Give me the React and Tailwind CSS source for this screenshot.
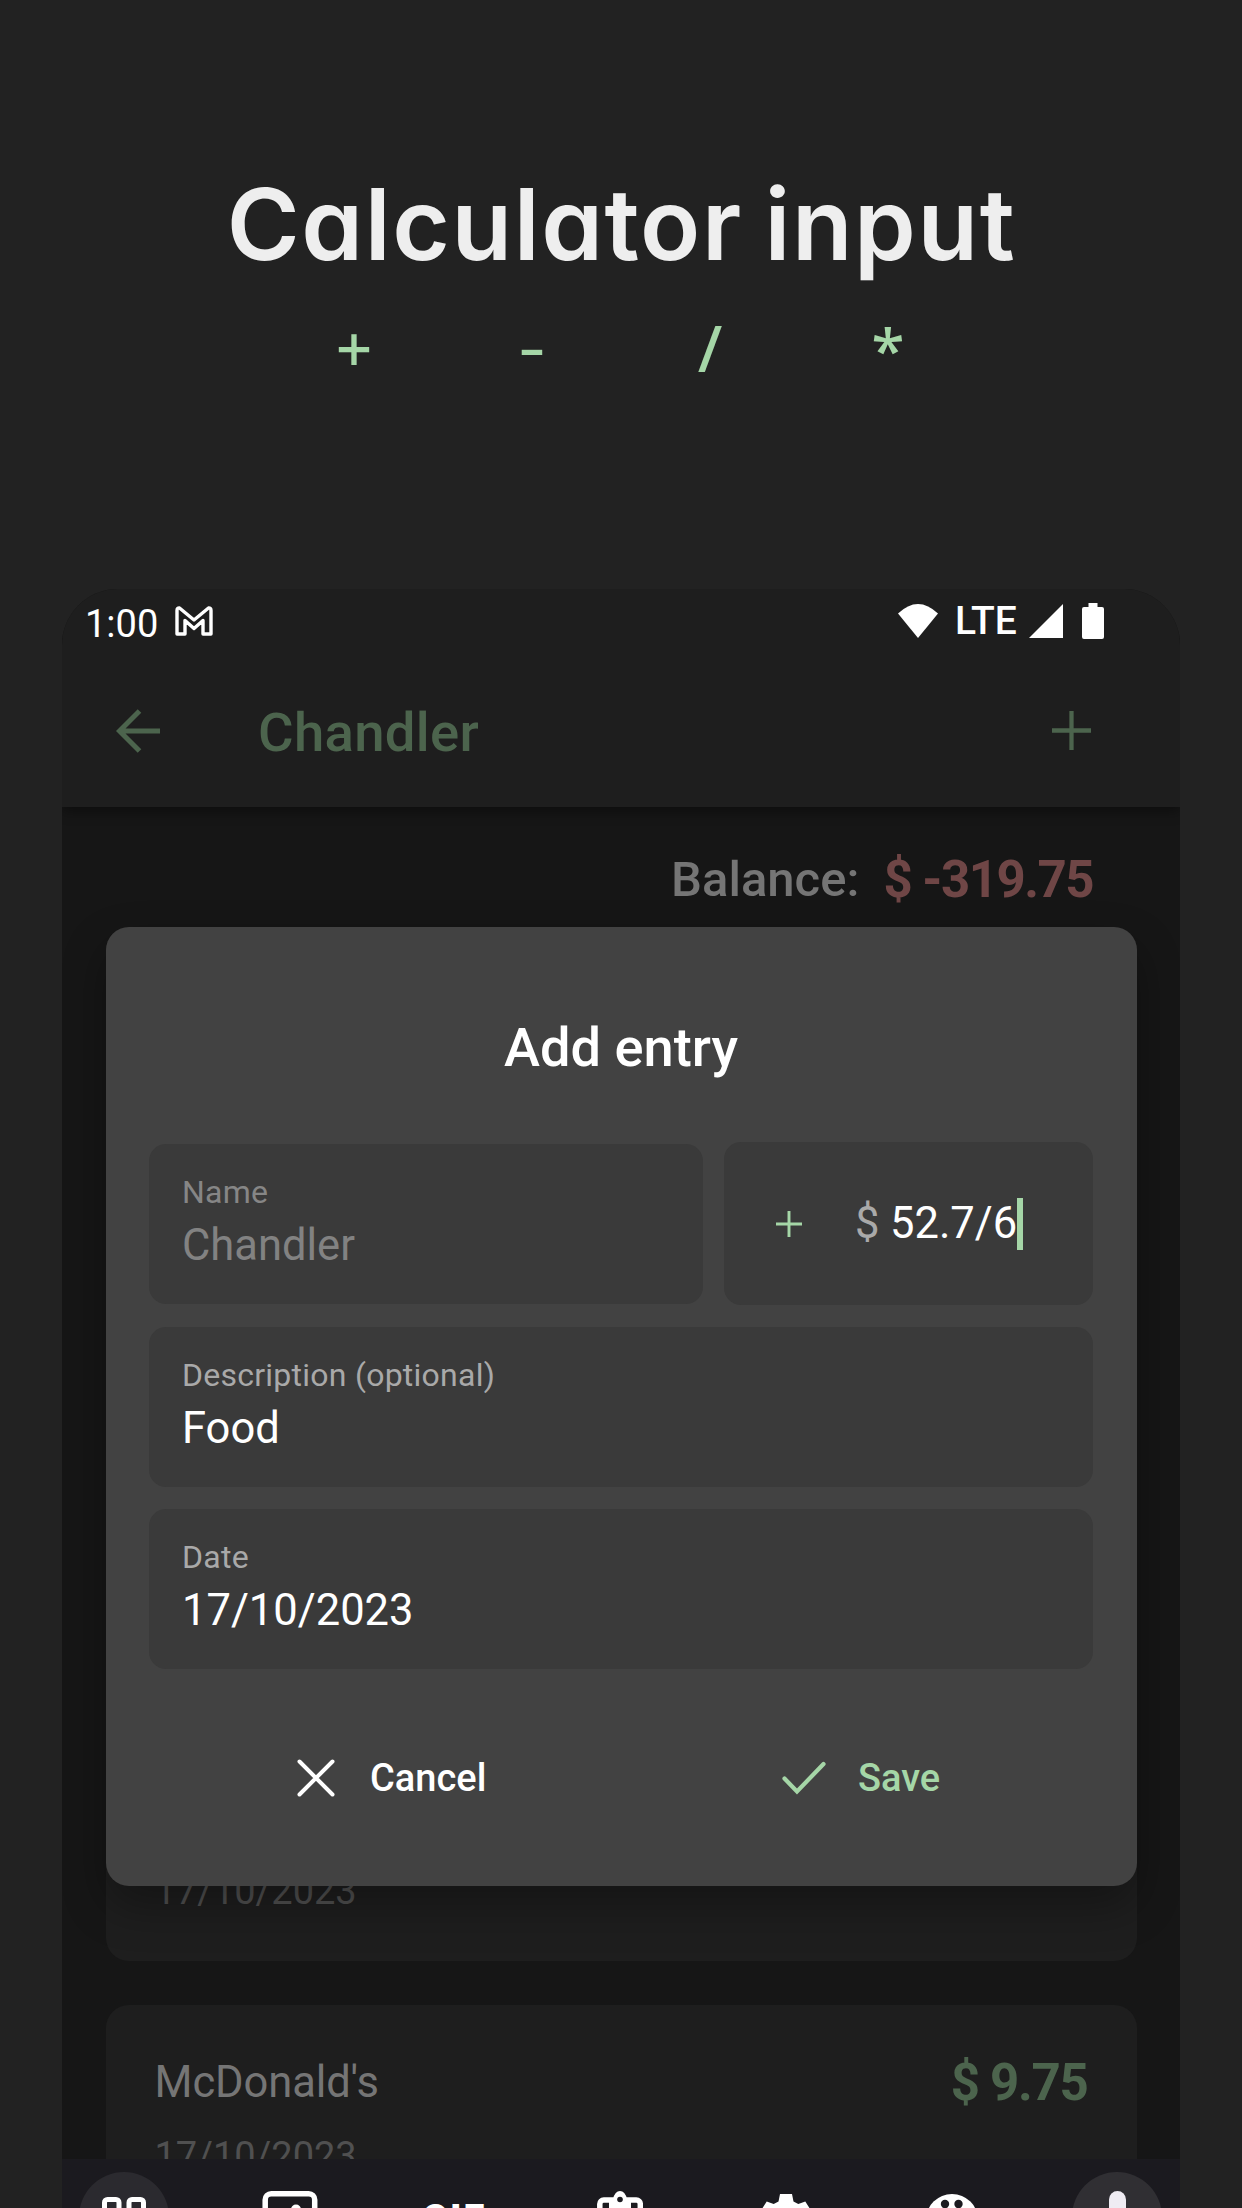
const stroke = { fill: "none", stroke: "currentColor" };

function Plus({ className, width }) {
  return (
    <svg viewBox="0 0 40 40" className={className} {...stroke} strokeWidth={width}>
      <path d="M20 0V40M0 20H40" />
    </svg>
  );
}

function StatusBar() {
  return (
    <div className="flex h-[69px] items-center pl-[23px] pr-[76px] text-white">
      <span className="w-[89.500px] text-[38px] leading-[44px]">1:00</span>
      <svg viewBox="0 0 38 30" className="h-[30px] w-[38px] -mt-[5px]" {...stroke} strokeWidth="3.4" strokeLinejoin="round">
        <path d="M2 4.5Q2 1.8 4.5 2L19 14L33.500 2Q36 1.800 36 4.500V28H28V14.500L19 22.500L10 14.500V28H2Z" />
      </svg>
      <div className="ml-auto flex items-center -mt-[5px]">
        <svg viewBox="0 0 40 34" className="h-[34px] w-10" fill="currentColor">
          <path d="M0 9.500Q20 -9.500 40 9.500L20 34Z" />
        </svg>
        <span className="ml-[17px] w-[67px] text-[39px] font-[500] leading-[44px] tracking-[-0.2px]">LTE</span>
        <svg viewBox="0 0 34 34" className="ml-[7px] h-[34px] w-[34px]" fill="currentColor">
          <path d="M34 0V34H0Z" />
        </svg>
        <svg viewBox="0 0 22 36" className="ml-[19px] h-9 w-[22px]" fill="currentColor">
          <path d="M6.500 0H15.500V4H20Q22 4 22 6V34Q22 36 20 36H2Q0 36 0 34V6Q0 4 2 4H6.500Z" />
        </svg>
      </div>
    </div>
  );
}

function Field({ label, value, muted }) {
  return (
    <div className="h-[160px] rounded-[17px] bg-[#3a3a3a] pl-[33px] pt-[29px]">
      <div className={muted ? "text-[32px] leading-[38px] tracking-[0.25px] text-[#868686]" : "text-[32px] leading-[38px] tracking-[0.25px] text-[#a9a9a9]"}>{label}</div>
      <div className={muted ? "mt-[9px] text-[43.500px] leading-[52px] text-[#828282]" : "mt-[9px] text-[43.500px] leading-[52px] text-white"}>{value}</div>
    </div>
  );
}

function Dialog() {
  return (
    <div className="absolute left-[43.500px] top-[338px] h-[959px] w-[1031px] rounded-[23px] bg-[#424242] px-[43.500px] shadow-[0_20px_45px_rgba(0,0,0,0.32)]">
      <h2 className="pt-[89px] text-center text-[54.200px] font-medium leading-[64px] text-white">Add entry</h2>
      <div className="mt-[62px] flex items-center gap-[21px]">
        <div className="w-[554px]">
          <Field label="Name" value="Chandler" muted />
        </div>
        <div className="flex h-[163px] flex-1 items-center rounded-[17px] bg-[#3a3a3a] pl-[52px]">
          <Plus className="h-[26px] w-[26px] text-[#a5d6a7]" width="4.500" />
          <div className="ml-[53px] flex items-center text-[43.500px] leading-[52px]">
            <span className="w-[35px] text-[#a9a9a9]">$</span>
            <span className="text-white">52.7/6</span>
            <span className="-ml-[0.500px] h-[52px] w-[6px] bg-[#a5d6a7]" />
          </div>
        </div>
      </div>
      <div className="mt-[22px] flex flex-col gap-[22px]">
        <Field label="Description (optional)" value="Food" />
        <Field label="Date" value="17/10/2023" />
      </div>
      <div className="mt-[73px] flex text-[38px] font-medium leading-[72px]">
        <button className="flex w-[484px] items-center pl-[148px] text-white">
          <svg viewBox="0 0 38 38" className="h-[38px] w-[38px]" {...stroke} strokeWidth="4" strokeLinecap="round">
            <path d="M2.500 2.500L35.500 35.500M35.500 2.500L2.500 35.500" />
          </svg>
          <span className="ml-[35px]">Cancel</span>
        </button>
        <button className="flex items-center pl-[149px] text-[#a5d6a7]">
          <svg viewBox="0 0 44 34" className="h-[34px] w-[44px]" {...stroke} strokeWidth="4.200" strokeLinecap="round">
            <path d="M2.500 17.500L15 30.500L41.500 3" />
          </svg>
          <span className="ml-[32px]">Save</span>
        </button>
      </div>
    </div>
  );
}

function EntryCard({ name, amount }) {
  return (
    <div className="h-[221px] rounded-[23px] bg-[#1e1e1e] px-[49px] pt-[48px]">
      <div className="flex items-center justify-between leading-[60px]">
        <span className="text-[43.500px] tracking-[-0.1px] text-[#757575]">{name}</span>
        <span className="text-[51px] font-bold tracking-[-1.3px] text-[#4c644d]">{amount}</span>
      </div>
      <div className="mt-[21px] text-[38px] leading-[44px] text-[#505050]">17/10/2023</div>
    </div>
  );
}

function Keyboard() {
  return (
    <div className="absolute inset-x-0 bottom-0 flex h-[49px] items-start overflow-hidden bg-[#1b1a1f] pl-[17px] pr-[18px] text-white">
      <div className="mt-[13px] flex h-[90px] w-[90px] shrink-0 justify-center rounded-full bg-[#2b2a2f] pt-[25px]">
        <svg viewBox="0 0 44 44" className="h-[44px] w-[44px]" {...stroke} strokeWidth="5">
          <rect x="2.500" y="2.500" width="14.500" height="15" rx="3" />
          <rect x="27" y="2.500" width="14.500" height="15" rx="3" />
        </svg>
      </div>
      <svg viewBox="0 0 56 56" className="ml-[93px] mt-[32px] h-14 w-14 shrink-0" {...stroke} strokeWidth="5.500">
        <rect x="3.200" y="2.800" width="49.500" height="49" rx="6" />
        <circle cx="34" cy="18.500" r="5" fill="currentColor" stroke="none" />
      </svg>
      <span className="ml-[104px] mt-[38px] w-[72px] shrink-0 text-[38px] font-black leading-[44px] tracking-[2px]">GIF</span>
      <svg viewBox="0 0 46 56" className="ml-[103px] mt-[32px] h-14 w-[46px] shrink-0" {...stroke} strokeWidth="5.500">
        <rect x="2.800" y="9" width="40.500" height="44" rx="4" />
        <path d="M12 18V8H16Q18 0 23 0T30 8H34V18Z" fill="currentColor" stroke="none" />
        <circle cx="23" cy="8.500" r="2.800" fill="#1b1a1f" stroke="none" />
      </svg>
      <svg viewBox="0 0 52 52" className="ml-[117px] mt-[35px] h-[52px] w-[52px] shrink-0" fill="currentColor">
        <path d="M20 0H32L33.500 7.500L38.300 10L45.300 7.500L52 18L46 23V29L52 34L46 44L20 52L6 44L0 34L6 29V23L0 18L6.700 7.500L13.700 10L18.500 7.500Z" />
      </svg>
      <svg viewBox="0 0 52 52" className="ml-[114px] mt-[35px] h-[52px] w-[52px] shrink-0" fill="currentColor">
        <circle cx="26" cy="26" r="26" />
        <g fill="#1b1a1f">
          <circle cx="19" cy="10" r="4.200" />
          <circle cx="32.500" cy="10" r="4.200" />
        </g>
      </svg>
      <div className="ml-auto mt-[13px] flex h-[90px] w-[90px] shrink-0 justify-center rounded-full bg-[#302f33] pt-[19px]">
        <div className="h-[46px] w-[17px] rounded-full bg-[#efecf3]" />
      </div>
    </div>
  );
}

export default function App() {
  return (
    <main className="flex h-[2208px] w-[1242px] flex-col items-center overflow-hidden bg-[#222222] font-[Roboto,sans-serif]">
      <header className="h-[589px] w-full shrink-0 pt-[164px] text-center">
        <h1 className="whitespace-nowrap pl-[1px] font-['Inter',sans-serif] text-[99px] font-[560] leading-[120px] tracking-[1.600px] text-[#eeeeee] [font-feature-settings:'cv11'] [word-spacing:-5px]">
          Calculator input
        </h1>
        <div className="mx-auto mt-[20px] grid w-[712px] grid-cols-4 items-baseline font-['Noto_Sans',sans-serif] text-[64px] font-medium leading-[88px] text-[#a5d6a7]">
          <span>+</span>
          <span className="font-['Inter',sans-serif] font-normal">-</span>
          <span>/</span>
          <span className="text-[60px]">*</span>
        </div>
      </header>

      <section className="relative h-[1619px] w-[1118px] shrink-0 overflow-hidden rounded-t-[56px] bg-[#161616]">
        <div className="relative h-[217.500px] bg-[#1e1e1e] shadow-[0_4px_12px_rgba(0,0,0,0.4)]">
          <StatusBar />
          <div className="flex h-[148px] items-center pl-[54px] pr-[89.500px] text-[#4c644d]">
            <svg viewBox="0 0 44 44" className="h-11 w-11 -mt-[3px]" {...stroke} strokeWidth="5">
              <path d="M23.500 2L3.500 22L23.500 42M3.500 22H44" />
            </svg>
            <span className="-mt-[1px] ml-[98px] text-[54.500px] font-medium leading-[64px] tracking-[0.3px]">Chandler</span>
            <Plus className="ml-auto h-[39px] w-[39px] -mt-[3px]" width="4.400" />
          </div>
        </div>
        <div className="flex h-[147px] items-center justify-end pr-[87px]">
          <span className="text-[49px] font-medium text-[#757575]">Balance:</span>
          <span className="ml-[24px] text-[51px] font-bold tracking-[-1.5px] text-[#6f4646]">$ -319.75</span>
        </div>
        <div className="flex flex-col gap-[44px] px-[43.500px] pt-[786.500px]">
          <EntryCard name="Groceries" amount="$ 12.40" />
          <EntryCard name="McDonald's" amount="$ 9.75" />
        </div>
        <Dialog />
        <Keyboard />
      </section>
    </main>
  );
}
